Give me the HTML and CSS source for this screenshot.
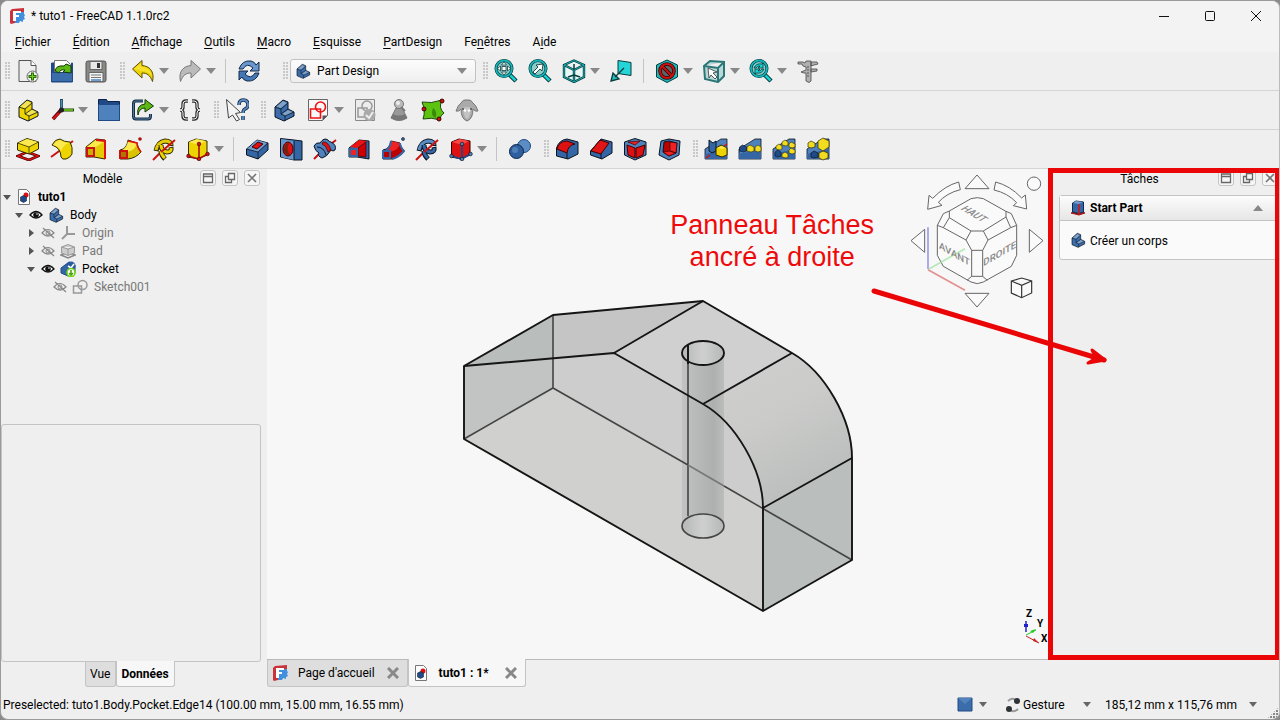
FILE: index.html
```html
<!DOCTYPE html>
<html lang="fr">
  <head>
    <meta charset="UTF-8" />
    <meta name="viewport" content="width=device-width, initial-scale=1.0" />
    <title>* tuto1 - FreeCAD 1.1.0rc2</title>
    <link rel="stylesheet" href="styles.css">
  </head>
  <body>
    <!-- shared icons -->
    <svg class="sprite" aria-hidden="true">
      <symbol id="i-logo" viewBox="0 0 16 16">
        <path d="M1 3l2-2 12-1v4H6v11l-4 1-1-1z" fill="#cb333b"/>
        <path d="M6 4h9v2l1 1-1 2 1 2-2 1v2l-3-1-1 2H6z" fill="#418fde"/>
        <g fill="#fff"><rect x="4" y="3" width="3" height="10"/><rect x="4" y="3" width="8" height="2"/><rect x="4" y="7" width="6" height="2"/></g>
      </symbol>
      <symbol id="i-body" viewBox="0 0 24 24">
        <path d="M3 9l8-7 5 2v7l6 3v4l-10 5-9-4z" fill="currentColor" stroke="#0b1521" stroke-linejoin="round"/>
        <path d="M4 9l7-6 4 2-6 5zM10 16l6-4 5 2-7 4z" fill="#fff" fill-opacity=".35"/>
        <path d="M3 9l6 2v5l4 2v5M9 11l7-6M9 16l7-5M13 18l9-4" fill="none" stroke="#0b1521" stroke-width=".8"/>
      </symbol>
      <symbol id="i-doc" viewBox="0 0 16 16">
        <path d="M2.500 .5h8l3 3v12h-11z" fill="#fff" stroke="#777"/>
        <circle cx="10" cy="6" r="2.500" fill="#d11"/>
        <path d="M4.500 8l3-1.500 3 1.500v4l-3 1.500-3-1.500z" fill="#204a87" stroke="#0b1521" stroke-width=".5"/>
      </symbol>
      <symbol id="i-caret" viewBox="0 0 10 6"><path d="M0 0h10L5 6z" fill="currentColor"/></symbol>
      <symbol id="i-dock" viewBox="0 0 14 14"><path d="M2.500 3h9v8.500h-9zM2.500 5.500h9" fill="none" stroke="#666" stroke-width="1.300"/></symbol>
      <symbol id="i-float" viewBox="0 0 14 14"><path d="M5.500 2.500h6v6h-6zM5 5.500H2.500v6h6V9" fill="none" stroke="#666" stroke-width="1.300"/></symbol>
      <symbol id="i-close" viewBox="0 0 14 14"><path d="M3 3l8 8M11 3l-8 8" fill="none" stroke="#777" stroke-width="1.600"/></symbol>
      <symbol id="i-eye" viewBox="0 0 16 16">
        <path d="M2 8q6-7 12 0-6 6-12 0z" fill="#fff" stroke="#111" stroke-width="1.300"/><circle cx="8" cy="8" r="2.800" fill="#111"/><circle cx="9" cy="7" r=".8" fill="#fff"/>
      </symbol>
      <symbol id="i-hidden" viewBox="0 0 16 16">
        <path d="M2 8q6-7 12 0-6 6-12 0zM3 3l11 10" fill="none" stroke="#888" stroke-width="1.200"/><circle cx="8" cy="8" r="2" fill="none" stroke="#888"/>
      </symbol>
      <symbol id="i-lens" viewBox="0 0 24 24">
        <path d="M15 15l7 7" stroke="#042a2a" stroke-width="4.500"/><path d="M15 15l6.500 6.500" stroke="#16d0d2" stroke-width="2.500"/>
        <circle cx="10" cy="9.500" r="8" fill="#8ccbcc" stroke="#063c3d" stroke-width="3"/><circle cx="10" cy="9.500" r="8" fill="none" stroke="#14b4b6" stroke-width="1.800"/>
      </symbol>
      <symbol id="i-ramp" viewBox="0 0 24 24">
        <path d="M1 12L17 2h6v20H1z" fill="#4f81bd" stroke="#0b1521" stroke-width=".8"/><path d="M1 17l22-5v10H1z" fill="#3465a4"/>
      </symbol>
    </svg>

    <div class="window">
      <header class="titlebar">
        <svg class="icon16"><use href="#i-logo"/></svg>
        <h1>* tuto1 - FreeCAD 1.1.0rc2</h1>
        <button type="button" aria-label="Réduire"><svg viewBox="0 0 12 12"><path d="M1 6.500h10"/></svg></button>
        <button type="button" aria-label="Agrandir"><svg viewBox="0 0 12 12"><rect x="1.500" y="1.500" width="9" height="9" rx="1"/></svg></button>
        <button type="button" aria-label="Fermer"><svg viewBox="0 0 12 12"><path d="M1 1l10 10M11 1L1 11"/></svg></button>
      </header>

      <nav class="menubar">
        <a href="#"><u>F</u>ichier</a>
        <a href="#"><u>É</u>dition</a>
        <a href="#"><u>A</u>ffichage</a>
        <a href="#"><u>O</u>utils</a>
        <a href="#"><u>M</u>acro</a>
        <a href="#"><u>E</u>squisse</a>
        <a href="#"><u>P</u>artDesign</a>
        <a href="#">Fe<u>n</u>êtres</a>
        <a href="#">A<u>i</u>de</a>
      </nav>

      <div class="toolbar-row">
        <div class="toolbar">
          <button type="button" aria-label="Nouveau"><svg viewBox="0 0 24 24"><path d="M3 1.500h12l5 5v16H3z" fill="#eee" stroke="#555"/><path d="M15 1.500v5h5" fill="#fff" stroke="#555"/><circle cx="16.500" cy="17.500" r="5.500" fill="#eee" stroke="#666"/><path d="M16.500 13.500v8M12.500 17.500h8" stroke="#2b6a0a" stroke-width="3"/><path d="M16.500 14.500v6M13.500 17.500h6" stroke="#73d216"/></svg></button>
          <button type="button" aria-label="Ouvrir"><svg viewBox="0 0 24 24"><path d="M1.500 4h3v12h17V4h1v19h-21z" fill="#204a87" stroke="#204a87"/><path d="M4.500 1.500h12l4 4v13h-16z" fill="#fff" stroke="#777"/><path d="M1.500 13.500h21v9h-21z" fill="#3b6daa" stroke="#204a87"/><path d="M5 12q1-6 9-5l2-2 5 2v7l-8-1 2-2q-5-1-6 3z" fill="#5db815" stroke="#17380a"/></svg></button>
          <button type="button" aria-label="Enregistrer"><svg viewBox="0 0 24 24"><rect x="2" y="2" width="20" height="21" rx="2" fill="#888a85" stroke="#555"/><path d="M6 2.500h12v8H6z" fill="#e8e8e8" stroke="#666"/><path d="M13 4h3v5h-3z" fill="#333"/><path d="M5 13.500h14v9H5z" fill="#f3f3f3" stroke="#666"/><path d="M7 16h10M7 18.500h10" stroke="#777"/><path d="M7 21h10" stroke="#729fcf" stroke-width="2"/></svg></button>
        </div>
        <div class="toolbar">
          <button type="button" class="with-menu" aria-label="Annuler"><svg viewBox="0 0 24 24"><path d="M1.500 10L11 1.500v5C18 7 24 12 21.500 22.500 19 16 16 14 11 14v5z" fill="#edd400" stroke="#5c4d00"/><path d="M3 10l7-6v4q9 0 11 9-4-5-11-5" fill="#fce94f" fill-opacity=".6"/></svg><svg class="caret"><use href="#i-caret"/></svg></button>
          <button type="button" class="with-menu" aria-label="Rétablir"><svg viewBox="0 0 24 24"><path d="M22.500 10L13 1.500v5C6 7 0 12 2.500 22.500 5 16 8 14 13 14v5z" fill="#bbb" stroke="#777"/></svg><svg class="caret"><use href="#i-caret"/></svg></button>
          <span class="sep"></span>
          <button type="button" aria-label="Rafraîchir"><svg viewBox="0 0 24 24"><path d="M2 10q3-9 12-8 4 1 5 4l3-3v9h-9l3-3q-6-6-10 1z" fill="#6797cc" stroke="#12294a"/><path d="M22 14q-3 9-12 8-4-1-5-4l-3 3v-9h9l-3 3q6 6 10-1z" fill="#4478b5" stroke="#12294a"/></svg></button>
        </div>
        <div class="toolbar workbench">
          <label class="select-box">
            <svg class="icon16 blue"><use href="#i-body"/></svg>
            <select aria-label="Atelier"><option>Part Design</option></select>
            <svg class="caret"><use href="#i-caret"/></svg>
          </label>
        </div>
        <div class="toolbar">
          <button type="button" aria-label="Tout ajuster"><svg viewBox="0 0 24 24"><use href="#i-lens"/><path d="M10 3l2.500 3h-5zM10 16l2.500-3h-5zM3.500 9.500l3-2.500v5zM16.500 9.500l-3-2.500v5zM8 7.500h4v4H8z" fill="#fff" stroke="#042a2a" stroke-width=".7"/></svg></button>
          <button type="button" aria-label="Ajuster la sélection"><svg viewBox="0 0 24 24"><use href="#i-lens"/><path d="M5 13l5-5-2-2 7-1-1 7-2-2-5 5z" fill="#fff" stroke="#042a2a" stroke-width=".8"/></svg></button>
          <button type="button" class="with-menu" aria-label="Vue isométrique"><svg viewBox="0 0 24 24"><path d="M12 1.500l10 4.500v12l-10 5-10-5V6zM2 6l10 5 10-5M12 11v12" fill="#e9f6f6" stroke="#063c3d" stroke-width="2.400"/><path d="M12 1.500l10 4.500v12l-10 5-10-5V6zM2 6l10 5 10-5M12 11v12" fill="none" stroke="#1cb0b2"/><path d="M12 11v-6M12 16l-6 2M12 16l6 2" stroke="#063c3d" stroke-width="1.500"/></svg><svg class="caret"><use href="#i-caret"/></svg></button>
          <button type="button" aria-label="Aligner à la sélection"><svg viewBox="0 0 24 24"><path d="M9 1.500l13 2v13l-13-2z" fill="#25d5d7" stroke="#063c3d"/><path d="M15 9l-9 9M2 22l2-8 6 6z" fill="#25b9bb" stroke="#063c3d" stroke-width="1.300"/></svg></button>
          <span class="sep"></span>
          <button type="button" class="with-menu" aria-label="Style de tracé"><svg viewBox="0 0 24 24"><path d="M12 1l10.500 5v12L12 23.500 1.500 18V6z" fill="#20b9bb" stroke="#063c3d"/><circle cx="12" cy="12" r="7" fill="#5e6363" stroke="#280000" stroke-width="3.500"/><path d="M7 7l10 10" stroke="#280000" stroke-width="3.500"/><circle cx="12" cy="12" r="7" fill="none" stroke="#cc1010" stroke-width="2"/><path d="M7 7l10 10" stroke="#cc1010" stroke-width="2"/></svg><svg class="caret"><use href="#i-caret"/></svg></button>
          <button type="button" class="with-menu" aria-label="Sélection"><svg viewBox="0 0 24 24"><path d="M2 7l6-5 14 1v14l-6 6-13-3zM2 7l14 2 6-6M16 9v14" fill="#b9d9d9" stroke="#2b7778" stroke-width="2"/><path d="M6 9l9 4-4 1 4 4-2 2-4-4-2 3z" fill="#fff" stroke="#333" stroke-width=".8"/></svg><svg class="caret"><use href="#i-caret"/></svg></button>
          <button type="button" class="with-menu" aria-label="Zoom"><svg viewBox="0 0 24 24"><use href="#i-lens"/><path d="M5 9q2-5 8-4l1-1v5H9l2-2q-3 0-4 2zM15 10q-2 5-8 4l-1 1v-5h5l-2 2q3 0 4-2z" fill="#16d0d2" stroke="#042a2a" stroke-width=".7"/></svg><svg class="caret"><use href="#i-caret"/></svg></button>
          <button type="button" aria-label="Mesurer"><svg viewBox="0 0 24 24"><path d="M10 2h5v20l-2 1.500-3-1.500v-8H8l-3-1 5-2V8L7 7 6 5H2V3h5l2 1zM15 3h6l1 2-4 1-3 1zM15 10h6v2l-6 1z" fill="#b0b0b0" stroke="#555" stroke-width=".9"/><path d="M11 8h2M11 11h2M11 14h2M11 17h2" stroke="#555"/></svg></button>
        </div>
      </div>

      <div class="toolbar-row">
        <div class="toolbar">
          <button type="button" class="yellow" aria-label="Créer une pièce"><svg><use href="#i-body"/></svg></button>
          <button type="button" class="with-menu" aria-label="Origine"><svg viewBox="0 0 24 24"><path d="M11.500 12V1" stroke="#204a63" stroke-width="3"/><path d="M11.500 2v9" stroke="#4c8fb0" stroke-width="1.500"/><path d="M12 12h12" stroke="#1d4708" stroke-width="3"/><path d="M14 12h9" stroke="#73d216" stroke-width="1.500"/><path d="M11 12l-8 9" stroke="#5b0a0a" stroke-width="3.500"/><path d="M9 15l-6 6" stroke="#d11" stroke-width="2"/><circle cx="11.500" cy="12" r="2.500" fill="#222"/></svg><svg class="caret"><use href="#i-caret"/></svg></button>
          <button type="button" aria-label="Groupe"><svg viewBox="0 0 24 24"><path d="M1.500 1.500h8l1 2h12v19h-21z" fill="#204a87" stroke="#0b2346"/><path d="M1.500 6.500h21v16h-21z" fill="#4f81bd" stroke="#204a87"/></svg></button>
          <button type="button" class="with-menu" aria-label="Lien"><svg viewBox="0 0 24 24"><path d="M12 3H5Q2.500 3 2.500 5.500v13Q2.500 21 5 21h12q2.500 0 2.500-3v-2" fill="none" stroke="#17304a" stroke-width="3"/><path d="M12 3H5Q2.500 3 2.500 5.500v13Q2.500 21 5 21h12q2.500 0 2.500-3v-2" fill="none" stroke="#52799b" stroke-width="1"/><path d="M7 17Q5 7 14 6V1.500L22.500 8 14 14v-4q-6 0-7 7z" fill="#5db815" stroke="#17380a"/></svg><svg class="caret"><use href="#i-caret"/></svg></button>
          <button type="button" aria-label="Jeu de variables"><svg viewBox="0 0 24 24"><path d="M10 3H8Q5 3 5 6v3q0 3-3 3 3 0 3 3v3q0 3 3 3h2M14 3h2q3 0 3 3v3q0 3 3 3-3 0-3 3v3q0 3-3 3h-2" fill="none" stroke="#333" stroke-width="3.400"/><path d="M10 3H8Q5 3 5 6v3q0 3-3 3 3 0 3 3v3q0 3 3 3h2M14 3h2q3 0 3 3v3q0 3 3 3-3 0-3 3v3q0 3-3 3h-2" fill="none" stroke="#eee"/></svg></button>
        </div>
        <div class="toolbar">
          <button type="button" aria-label="Qu'est-ce que c'est ?"><svg viewBox="0 0 24 24"><path d="M14 7q0-5 4-5 5 0 5 5 0 3-3 4-2 1-2 4M18 18v4" fill="none" stroke="#12294a" stroke-width="3.500"/><path d="M14 7q0-5 4-5 5 0 5 5 0 3-3 4-2 1-2 4M18 18v4" fill="none" stroke="#5b8cc4" stroke-width="1.800"/><path d="M1.500 1.500l14 13-5 1 4 6-3 1.500-4-6-4 3z" fill="#f3f3f3" stroke="#444"/></svg></button>
        </div>
        <div class="toolbar">
          <button type="button" class="blue" aria-label="Créer un corps"><svg><use href="#i-body"/></svg></button>
          <button type="button" class="with-menu" aria-label="Créer une esquisse"><svg viewBox="0 0 24 24"><path d="M2.500 1.500h19v16l-5 5h-14z" fill="#f8f8f8" stroke="#666"/><path d="M16.500 22.500v-5h5z" fill="#555"/><circle cx="14.500" cy="9" r="5" fill="none" stroke="#e11" stroke-width="1.600"/><path d="M4.500 11h10v9h-10z" fill="none" stroke="#e11" stroke-width="1.600"/></svg><svg class="caret"><use href="#i-caret"/></svg></button>
          <button type="button" aria-label="Valider l'esquisse"><svg viewBox="0 0 24 24"><path d="M2.500 1.500h19v21h-19z" fill="#ececec" stroke="#888"/><circle cx="14" cy="8" r="5" fill="none" stroke="#999" stroke-width="1.500"/><path d="M5 10h9v9H5z" fill="none" stroke="#999" stroke-width="1.500"/><circle cx="16.500" cy="17" r="6" fill="#aaa"/><path d="M13 17l3 3 4-6" fill="none" stroke="#eee" stroke-width="2"/></svg></button>
          <button type="button" aria-label="Vérifier la géométrie"><svg viewBox="0 0 24 24"><path d="M9 10h6l5 10q-8 5-16 0z" fill="#999" stroke="#777"/><path d="M6 16q6 3 12 0l2 4q-8 5-16 0z" fill="#777"/><circle cx="12" cy="6" r="4.500" fill="#bbb" stroke="#777"/><path d="M14 9l4 4" stroke="#777" stroke-width="2"/><circle cx="11" cy="5" r="2" fill="#eee"/></svg></button>
          <button type="button" aria-label="Forme liée"><svg viewBox="0 0 24 24"><path d="M1 4q9 2 20-2-4 8 2 13-4 2-4 7-8-3-17-1 3-8-1-17z" fill="#5cc410" stroke="#1d4708"/><path d="M12 10q4 2 3 10-6-2-3-10z" fill="#3a8a0a"/><circle cx="21" cy="3" r="2" fill="#c11" stroke="#400"/><circle cx="3" cy="11" r="2" fill="#c11" stroke="#400"/><circle cx="18" cy="21" r="2" fill="#c11" stroke="#400"/></svg></button>
          <button type="button" aria-label="Clone"><svg viewBox="0 0 24 24"><path d="M6 5Q8 1 12 2q4-1 6 3 3 2 5 8-3 1-5-2 0 10-6 12-6-2-6-12-2 3-5 2 2-6 5-8z" fill="#aaa" stroke="#777"/><path d="M8 10q4-2 8 0-1 10-4 11-3-1-4-11z" fill="#c4c4c4"/><path d="M9 12l2 1M15 12l-2 1" stroke="#fff" stroke-width="2"/><circle cx="8" cy="11" r="1" fill="#555"/><circle cx="16" cy="11" r="1" fill="#555"/></svg></button>
        </div>
      </div>

      <div class="toolbar-row">
        <div class="toolbar">
          <button type="button" aria-label="Protrusion"><svg viewBox="0 0 24 24"><path d="M2 19l9-4 11 4-9 4z" fill="none" stroke="#4d0505" stroke-width="2.800"/><path d="M2 19l9-4 11 4-9 4z" fill="none" stroke="#e11" stroke-width="1.300"/><path d="M1.500 6L11 1.500 22.500 5v7L13 17 1.500 13z" fill="#edd400" stroke="#302b00"/><path d="M2 6l9-4 11 3-9 5z" fill="#fce94f"/><path d="M1.500 6L13 10l9.500-5M13 10v7" fill="none" stroke="#302b00" stroke-width=".8"/></svg></button>
          <button type="button" aria-label="Révolution"><svg viewBox="0 0 24 24"><path d="M1 20L23 4" stroke="#c11" stroke-width="2"/><path d="M2 8Q5 2 10 2q4 3 10 3 3 5 2 12-2 4-6 5-4 1-5-2 0-9-9-12z" fill="#edd400" stroke="#302b00"/><path d="M3 8q4-5 7-5 4 3 9 3-5 1-8 8-2-5-8-6z" fill="#fce94f"/></svg></button>
          <button type="button" aria-label="Lissage"><svg viewBox="0 0 24 24"><path d="M2 10L12 2l9 1v19l-11-2H2z" fill="#e3cc05" stroke="#302b00"/><path d="M3 10l9-7 9 1-11 7z" fill="#fce94f"/><path d="M12 3l9 1v18" fill="none" stroke="#d11" stroke-width="2"/><path d="M3 11h7v8H3z" fill="#c9b000" stroke="#c11" stroke-width="2"/></svg></button>
          <button type="button" aria-label="Balayage"><svg viewBox="0 0 24 24"><path d="M2 13q7-1 8-10l9 3q0 3 4 9-5 6-13 7H2z" fill="#d9c200" stroke="#302b00"/><path d="M10 4l9 2q-1 7-10 9l-6-1q6-3 7-10z" fill="#fce94f"/><path d="M10 4l9 2q0 4 4 9" fill="none" stroke="#d11" stroke-width="1.600"/><path d="M2 14h7v7H2z" fill="#8b2500" fill-opacity=".5" stroke="#c11" stroke-width="2"/><circle cx="22" cy="2" r="1.800" fill="#a11"/></svg></button>
          <button type="button" aria-label="Hélice"><svg viewBox="0 0 24 24"><path d="M1 23l7-7" stroke="#c11" stroke-width="2"/><g fill="none"><path d="M4 14Q6 5 13 4q6 0 6 5" stroke="#302b00" stroke-width="5"/><path d="M4 13Q6 5 13 4q6 0 6 4" stroke="#e3cc05" stroke-width="3"/><path d="M9 8q0 6 6 7 5 0 4-5M9 14q0 4 4 8" stroke="#302b00" stroke-width="5"/><path d="M9 8q0 6 6 7 5 0 4-4M9 14q0 4 4 7" stroke="#edd400" stroke-width="3"/></g><path d="M9 15L23 3" stroke="#c11" stroke-width="2"/></svg></button>
          <button type="button" class="with-menu" aria-label="Primitive additive"><svg viewBox="0 0 24 24"><path d="M2.500 5L10 2l11 2v14l-9 4-9.500-2z" fill="#edd400" stroke="#302b00"/><path d="M3 5l8-3 9 2-7 4z" fill="#fce94f"/><path d="M2.500 19l10 3 9-5M13 7v15" fill="none" stroke="#a11" stroke-width="1.600"/><g fill="#d11" stroke="#400" stroke-width=".7"><circle cx="13" cy="7" r="1.800"/><circle cx="2.500" cy="19" r="1.800"/><circle cx="13" cy="22" r="1.800"/><circle cx="21.500" cy="17" r="1.800"/></g></svg><svg class="caret"><use href="#i-caret"/></svg></button>
          <span class="sep"></span>
          <button type="button" aria-label="Cavité"><svg viewBox="0 0 24 24"><path d="M1.500 12L12 3l11 3v7l-10 9-11.500-4z" fill="#3465a4" stroke="#0b1521"/><path d="M2 12l10-9 10 3-9 9z" fill="#729fcf"/><path d="M1.500 12L13 15l10-9M13 15v7" fill="none" stroke="#0b1521" stroke-width=".8"/><path d="M7 10l6-5 5 2-6 5z" fill="#d11" stroke="#400"/></svg></button>
          <button type="button" aria-label="Perçage"><svg viewBox="0 0 24 24"><path d="M1.500 1.500L15 3l8 1v19l-8 0-13.500-3z" fill="#3465a4" stroke="#0b1521"/><path d="M2 2l13 2v19L2 20z" fill="#6796ca"/><path d="M15 4v19" stroke="#0b1521"/><ellipse cx="9" cy="12" rx="5" ry="7" fill="#d11" stroke="#400"/><path d="M10 6q-3 6 1 12-7 0-6-7 1-5 5-5z" fill="#721"/></svg></button>
          <button type="button" aria-label="Rainure"><svg viewBox="0 0 24 24"><path d="M1 22l5-5M18 7l5-4" stroke="#c11" stroke-width="2"/><path d="M7 6q4-6 8-3 1 2 3 2 6 3 4 8-2 2-4 0-4 7-9 8-5-2-3-5-4-2-5-7 2-4 6-3z" fill="#4f81bd" stroke="#0b1521"/><path d="M10 5q5-1 8 8l-3 2Q13 8 9 7z" fill="#d11" stroke="#400" stroke-width=".7"/><path d="M4 10q7 0 9 8" fill="none" stroke="#0b1521"/></svg></button>
          <button type="button" aria-label="Enlèvement par lissage"><svg viewBox="0 0 24 24"><path d="M2 11L12 3l10 1v18l-12-2H2z" fill="#3465a4" stroke="#0b1521"/><path d="M3 10l9-7 8 1-10 7z" fill="#e11"/><path d="M11 11l8-6v15l-8-1z" fill="#c00" stroke="#400" stroke-width=".7"/><path d="M3 12h7v7H3z" fill="#e22" stroke="#3465a4" stroke-width="2"/></svg></button>
          <button type="button" aria-label="Enlèvement par balayage"><svg viewBox="0 0 24 24"><path d="M2 13q7-1 8-9l9 2q0 3 4 8-5 7-13 8H2z" fill="#b00" stroke="#0b1521"/><path d="M10 4l9 2q-1 7-10 9l-6-1q6-3 7-10z" fill="#e22"/><path d="M10 4q-1 7-5 9M19 6q0 4 4 8-5 6-12 8M2 14h7v7H2z" fill="none" stroke="#3465a4" stroke-width="2"/><circle cx="22" cy="2" r="1.500" fill="#3465a4" stroke="#0b1521" stroke-width=".6"/></svg></button>
          <button type="button" aria-label="Enlèvement hélicoïdal"><svg viewBox="0 0 24 24"><path d="M1 23l7-7" stroke="#c11" stroke-width="2"/><g fill="none"><path d="M4 14Q6 5 13 4q6 0 6 5" stroke="#0b1521" stroke-width="5"/><path d="M4 13Q6 5 13 4q6 0 6 4" stroke="#5b8cc4" stroke-width="3"/><path d="M9 8q0 6 6 7 5 0 4-5M9 14q0 4 4 8" stroke="#0b1521" stroke-width="5"/><path d="M9 8q0 6 6 7 5 0 4-4M9 14q0 4 4 7" stroke="#3465a4" stroke-width="3"/></g><path d="M9 15L23 3" stroke="#c11" stroke-width="2"/></svg></button>
          <button type="button" class="with-menu" aria-label="Primitive soustractive"><svg viewBox="0 0 24 24"><path d="M2.500 5L10 2l11 2v14l-9 4-9.500-2z" fill="#d11" stroke="#300"/><path d="M3 5l8-3 9 2-7 4z" fill="#f44"/><path d="M2.500 19l10 3 9-5M13 7v15" fill="none" stroke="#204a87" stroke-width="1.800"/><g fill="#4f81bd" stroke="#0b1521" stroke-width=".7"><circle cx="13" cy="7" r="1.800"/><circle cx="2.500" cy="19" r="1.800"/><circle cx="13" cy="22" r="1.800"/><circle cx="21.500" cy="17" r="1.800"/></g></svg><svg class="caret"><use href="#i-caret"/></svg></button>
          <span class="sep"></span>
          <button type="button" aria-label="Opération booléenne"><svg viewBox="0 0 24 24"><circle cx="16" cy="9" r="6.500" fill="#5b8cc4" stroke="#204a87"/><circle cx="8.500" cy="14.500" r="7" fill="#2f5f9f" stroke="#0b2346"/><circle cx="7" cy="13" r="3" fill="#729fcf" fill-opacity=".5"/></svg></button>
        </div>
        <div class="toolbar">
          <button type="button" aria-label="Congé"><svg viewBox="0 0 24 24"><path d="M1.500 11Q4 3 12 2l11 3v12l-10 5-11.500-3z" fill="#3465a4" stroke="#0b1521"/><path d="M2 12Q4 4 12 4l8 3q-7 1-8 9z" fill="#d11" stroke="#400"/><path d="M12 16v6" stroke="#0b1521"/></svg></button>
          <button type="button" aria-label="Chanfrein"><svg viewBox="0 0 24 24"><path d="M1.500 14L12 2l11 3v11l-10 6-11.500-4z" fill="#3465a4" stroke="#0b1521"/><path d="M2 14L11 3l9 3-8 11z" fill="#e01616" stroke="#400"/><path d="M12 17v5" stroke="#0b1521"/></svg></button>
          <button type="button" aria-label="Dépouille"><svg viewBox="0 0 24 24"><path d="M1.500 5L12 1.500 23 5v13l-11 5-10.500-5z" fill="#4f81bd" stroke="#0b1521"/><path d="M4 8l8 3v10l-7-3zM13 11l9-3-2 10-7 3z" fill="#d11" stroke="#400"/><path d="M5 5l12-1-5 4z" fill="#e22" stroke="#400" stroke-width=".7"/></svg></button>
          <button type="button" aria-label="Coque"><svg viewBox="0 0 24 24"><path d="M4 4l8-2 11 2-1 14-10 5-10-5z" fill="#4f81bd" stroke="#0b1521"/><path d="M7 5l5-1 8 2-1 10-7 3-6-4z" fill="#b00" stroke="#0b1521"/><path d="M13 5v9l6 2 1-10zM6 15l7-1 6 2-7 3z" fill="#e22" stroke="#400" stroke-width=".7"/></svg></button>
        </div>
        <div class="toolbar">
          <button type="button" aria-label="Symétrie"><svg viewBox="0 0 24 24"><use href="#i-ramp"/><path d="M5 3l4 3 3-2v10l-4 2-3-2z" fill="#3465a4" stroke="#0b1521"/><path d="M2 21l4-3M19 10l4-3" stroke="#c11" stroke-width="1.500"/><path d="M12 11l5-3 6 3v7l-5 2-6-2z" fill="#edd400" stroke="#302b00"/><path d="M13 11l5-2 4 2-4 1z" fill="#fce94f"/></svg></button>
          <button type="button" aria-label="Répétition linéaire"><svg viewBox="0 0 24 24"><use href="#i-ramp"/><path d="M1.500 10l3-2 4 2v4l-3 1-4-1z" fill="#204a87" stroke="#0b1521" stroke-width=".6"/><path d="M9 10l3-2 4 2v4l-3 1-4-1zM17 10l3-2 3 2v4l-3 1-3-1z" fill="#f2dc20" stroke="#302b00" stroke-width=".6"/></svg></button>
          <button type="button" aria-label="Répétition polaire"><svg viewBox="0 0 24 24"><use href="#i-ramp"/><path d="M3 15l3-2 3 2v4l-3 1-3-1z" fill="#204a87" stroke="#0b1521" stroke-width=".6"/><path d="M4 9l3-2 3 2v3l-2 1-4-1zM10 5l3-2 3 2v3l-2 1-4-1zM17 7l2-2 4 2v3l-3 1-3-1zM17 13l2-2 4 2v3l-3 1-3-1zM10 17l3-2 3 2v3l-2 1-4-1z" fill="#f2dc20" stroke="#302b00" stroke-width=".6"/></svg></button>
          <button type="button" aria-label="Transformation multiple"><svg viewBox="0 0 24 24"><use href="#i-ramp"/><path d="M12 4l5-3 6 3v6l-6 4-5-3zM2 6l3-2 4 2v4l-4 1-3-1zM13 16l4-2 5 2v5l-5 2-4-2z" fill="#f2dc20" stroke="#302b00" stroke-width=".7"/><path d="M5 16l3-2 4 2v4l-4 1-3-1z" fill="#204a87" stroke="#0b1521" stroke-width=".7"/></svg></button>
        </div>
      </div>

      <main class="workspace">
        <aside class="model-panel">
          <div class="panel-head">
            <h2>Modèle</h2>
            <button type="button" aria-label="Superposer"><svg><use href="#i-dock"/></svg></button>
            <button type="button" aria-label="Détacher"><svg><use href="#i-float"/></svg></button>
            <button type="button" aria-label="Fermer"><svg><use href="#i-close"/></svg></button>
          </div>
          <ul class="tree">
            <li class="open root"><svg class="icon16"><use href="#i-doc"/></svg><span>tuto1</span></li>
            <li class="open lvl1"><svg class="icon16"><use href="#i-eye"/></svg><svg class="icon16 blue"><use href="#i-body"/></svg><span>Body</span></li>
            <li class="closed lvl2 off"><svg class="icon16"><use href="#i-hidden"/></svg><svg class="icon16" viewBox="0 0 16 16"><path d="M7 1v8l-5 5M7 9h8" fill="none" stroke="#999" stroke-width="2"/></svg><span>Origin</span></li>
            <li class="closed lvl2 off"><svg class="icon16"><use href="#i-hidden"/></svg><svg class="icon16" viewBox="0 0 16 16"><path d="M1 12l7-3 7 3-7 3z" fill="none" stroke="#888" stroke-width="1.500"/><path d="M1.500 4L8 1.500 14.500 4v6L8 12.500 1.500 10zM1.500 4L8 6l6.500-2M8 6v6" fill="#ccc" stroke="#999"/></svg><span>Pad</span></li>
            <li class="open lvl2"><svg class="icon16"><use href="#i-eye"/></svg><svg class="icon16" viewBox="0 0 16 16"><path d="M1 7l8-6 6 3v8l-7 3-7-3z" fill="#3465a4" stroke="#204a87"/><circle cx="11" cy="5" r="4.500" fill="#2a5aa0"/><path d="M8 5l3 2 3-4" fill="none" stroke="#fff" stroke-width="1.600"/><circle cx="11" cy="11.500" r="4" fill="#fff" stroke="#73d216" stroke-width="1.600"/><path d="M11 9v4M9 12l2 2 2-2" fill="none" stroke="#4fa60f" stroke-width="1.600"/></svg><span>Pocket</span></li>
            <li class="lvl3 off"><svg class="icon16"><use href="#i-hidden"/></svg><svg class="icon16" viewBox="0 0 16 16"><circle cx="10.500" cy="6" r="4.500" fill="none" stroke="#999" stroke-width="1.500"/><path d="M1.500 7h8v7h-8z" fill="none" stroke="#999" stroke-width="1.500"/></svg><span>Sketch001</span></li>
          </ul>
          <div class="properties"></div>
          <div class="property-tabs">
            <button type="button">Vue</button>
            <button type="button" class="active">Données</button>
          </div>
        </aside>

        <section class="document">
          <div class="view3d">
            <svg class="scene" viewBox="267 169 784 490">
              <defs>
                <linearGradient id="round" x1="0" y1="0" x2=".5" y2="1"><stop offset="0" stop-color="#d0d0d0"/><stop offset=".5" stop-color="#cbcbca"/><stop offset="1" stop-color="#babebc"/></linearGradient>
                <linearGradient id="bore" x1="0" x2="1"><stop offset="0" stop-color="#c0c0c0"/><stop offset=".25" stop-color="#b7b9b8"/><stop offset=".75" stop-color="#a7aba9"/><stop offset="1" stop-color="#b8bab9"/></linearGradient>
                <linearGradient id="cap" x1="0" x2="1"><stop offset="0" stop-color="#b5b8b7"/><stop offset=".5" stop-color="#cfcfcf"/><stop offset="1" stop-color="#b5b8b7"/></linearGradient>
              </defs>
              <path d="M464 366L614 353 703 404C736 423 763 470 763 508V611L464 439z" fill="#d0d0ce"/>
              <path d="M553 358L614 353 703 404C736 423 763 470 763 508L553 388z" fill="#cdcdcd"/>
              <path d="M464 366L553 315V388L464 439z" fill="#c1c4c3"/>
              <path d="M464 366L553 315V358z" fill="#b9bdbb"/>
              <path d="M553 315L703 301 614 353 553 358z" fill="#c5c5c5"/>
              <path d="M614 353L703 301 792 353 703 404z" fill="#d0d0d0"/>
              <path d="M703 404L792 353C825 372 852 419 852 458L763 508C763 470 736 423 703 404z" fill="url(#round)"/>
              <path d="M763 508L852 458V560L763 611z" fill="#babebc"/>
              <path d="M682 353V526A21 12 0 0 0 724 526V353z" fill="url(#bore)" fill-opacity=".85"/>
              <ellipse cx="703" cy="353" rx="21" ry="12" fill="url(#cap)"/>
              <ellipse cx="703" cy="526" rx="21" ry="12" fill="url(#cap)"/>
              <g fill="none" stroke="#444" stroke-width="1.600">
                <path d="M553 315V388M464 439L553 388 688 465M724 486L852 560M688 344V516"/>
                <path d="M688 465L724 486" stroke="#777"/>
                <ellipse cx="703" cy="526" rx="21" ry="12"/>
              </g>
              <g fill="none" stroke="#151515" stroke-width="1.900" stroke-linejoin="round">
                <path d="M464 366L553 315 703 301 792 353C825 372 852 419 852 458V560L763 611 464 439z"/>
                <path d="M464 366L614 353 703 301M614 353L703 404C736 423 763 470 763 508V611M703 404L792 353M763 508L852 458M688 344V364"/>
                <ellipse cx="703" cy="353" rx="21" ry="12"/>
              </g>
            </svg>

            <svg class="navcube" viewBox="15 15 420 420">
              <g fill="none" stroke-width="5">
                <path d="M84 187V312" stroke="#9a9aea"/>
                <path d="M84 314L195 376" stroke="#e49090"/>
              </g>
              <g fill="#fafafa" stroke="#666" stroke-width="3" stroke-linejoin="round">
                <path d="M231 30L267 71H195zM231 426L195 385H267zM33 227L74 193V262zM429 227L388 193V262z"/>
                <circle cx="402" cy="56" r="20"/>
                <path d="M176 51L181 74Q140 84 115 112L126 121 83 133 87 91 98 100Q135 62 176 51zM287 51L282 75Q323 84 350 113L340 122 380 132 376 90 365 99Q330 62 287 51z"/>
                <path d="M112 181L130 146 148 138 213 101 232 98 250 101 316 138 334 146 350 181V271L334 304 250 351 232 356 213 351 130 304 112 271z"/>
                <path d="M148 138V158L213 198H250L318 156V138M130 188L112 181M130 188L148 158M130 188L198 225 213 198M198 225L215 256H248L264 225 250 198M264 225L332 188 350 181M332 188L318 156M215 256V334H248V256M215 334L201 346M248 334L262 346" fill="none"/>
              </g>
              <path d="M87 312L195 251" stroke="#a5e5a5" stroke-width="5" stroke-opacity=".8"/>
              <text transform="translate(180 133) rotate(30) skewX(-30)" class="face">HAUT</text>
              <text transform="translate(117 250) skewY(30)" class="face">AVANT</text>
              <text transform="translate(250 304) skewY(-30)" class="face">DROITE</text>
              <path d="M334 348L365 339 395 348V384L365 398 334 384zM334 348L365 361 395 348M365 361V398" fill="#fafafa" stroke="#333" stroke-width="3.500"/>
            </svg>

            <svg class="axes" viewBox="0 0 28 40">
              <path d="M5 16V27" stroke="#22c" stroke-width="1.500"/><path d="M3 19h4v3H3z" fill="#22c"/>
              <path d="M5 30L15 25" stroke="#2c2"/><path d="M9 26l6-2-3 4z" fill="#2c2"/>
              <path d="M5 31L18 38" stroke="#c22"/><path d="M13 33l5 5-6-2z" fill="#c22"/>
              <text x="5" y="12">Z</text><text x="16" y="22">Y</text><text x="20" y="37">X</text>
            </svg>
            <p class="callout">Panneau Tâches<br>ancré à droite</p>
          </div>
          <div class="doc-tabs">
            <div class="doc-tab"><svg class="icon16"><use href="#i-logo"/></svg><a href="#">Page d'accueil</a><button type="button" aria-label="Fermer l'onglet"><svg viewBox="0 0 12 12"><path d="M1 1l10 10M11 1L1 11"/></svg></button></div>
            <div class="doc-tab active"><svg class="icon16"><use href="#i-doc"/></svg><a href="#">tuto1 : 1*</a><button type="button" aria-label="Fermer l'onglet"><svg viewBox="0 0 12 12"><path d="M1 1l10 10M11 1L1 11"/></svg></button></div>
          </div>
        </section>

        <aside class="task-panel">
          <div class="panel-head">
            <h2>Tâches</h2>
            <button type="button" aria-label="Superposer"><svg><use href="#i-dock"/></svg></button>
            <button type="button" aria-label="Détacher"><svg><use href="#i-float"/></svg></button>
            <button type="button" aria-label="Fermer"><svg><use href="#i-close"/></svg></button>
          </div>
          <section class="task-box">
            <button type="button" class="task-title">
              <svg class="icon16" viewBox="0 0 16 16"><path d="M1 13l7-2 7 2-6 2z" fill="#c11" stroke="#a11"/><path d="M2.500 3L6 1l7.500 1v10L9 13.500 2.500 12z" fill="#3465a4" stroke="#12294a"/><path d="M3 3l3-2 7 1-4 2z" fill="#729fcf"/><path d="M9 4v10" stroke="#d11" stroke-width="1.500"/></svg>
              <span>Start Part</span>
              <svg class="caret up"><use href="#i-caret"/></svg>
            </button>
            <div class="task-body">
              <a href="#"><svg class="icon16 blue"><use href="#i-body"/></svg>Créer un corps</a>
            </div>
          </section>
          <div class="highlight"></div>
          <svg class="pointer" viewBox="0 0 240 80"><path d="M4 5L234 74"/><path d="M222 64L235 74 218 77 226 72z" class="head"/></svg>
        </aside>
      </main>

      <footer class="statusbar">
        <p>Preselected: tuto1.Body.Pocket.Edge14 (100.00 mm, 15.00 mm, 16.55 mm)</p>
        <button type="button" class="notify" aria-label="Notifications"><svg class="icon16" viewBox="0 0 16 16"><path d="M1 1h14v13H1z" fill="#3b6daa" stroke="#204a87"/><path d="M1 1l7 6 7-6" fill="#5382bd"/></svg><svg class="caret small"><use href="#i-caret"/></svg></button>
        <label class="status-select nav-style">
          <svg class="icon16" viewBox="0 0 16 16"><path d="M3 4q4-4 8-1M13 12q-4 4-8 1" fill="none" stroke="#999" stroke-width="2"/><circle cx="12" cy="4" r="3" fill="#2e3436"/><circle cx="4" cy="12" r="3" fill="#2e3436"/></svg>
          <select aria-label="Style de navigation"><option>Gesture</option></select>
          <svg class="caret small"><use href="#i-caret"/></svg>
        </label>
        <label class="status-select">
          <select aria-label="Dimensions"><option>185,12 mm x 115,76 mm</option></select>
          <svg class="caret small"><use href="#i-caret"/></svg>
        </label>
        <span class="grip"></span>
      </footer>
    </div>
  </body>
</html>
```
FILE: styles.css
```css
* {
  box-sizing: border-box;
  margin: 0;
  padding: 0;
}
body {
  background-color: #8a8a8a;
  font-family: Roboto, 'Noto Sans', sans-serif;
  font-size: 12px;
  line-height: 18px;
  color: #000;
}
button,
select {
  font: inherit;
  color: inherit;
  border: 0;
  background: none;
  appearance: none;
  outline: none;
}
a {
  color: inherit;
  text-decoration: none;
}
ul {
  list-style: none;
}
h1,
h2 {
  font-size: 12px;
  font-weight: normal;
}
svg {
  display: block;
  flex: none;
}
.sprite {
  position: absolute;
  width: 0;
  height: 0;
}
.icon16 {
  width: 16px;
  height: 16px;
}
.blue {
  color: #3b6daa;
}
.yellow {
  color: #edd400;
}
.caret {
  width: 10px;
  height: 6px;
  color: #888;
}
.caret.small {
  width: 8px;
  height: 5px;
  color: #666;
}
.caret.up {
  transform: rotate(180deg);
}

/* window frame */
.window {
  display: flex;
  flex-direction: column;
  height: 100vh;
  background-color: #efefef;
  border: 1px solid #9a9a9a;
  border-right-color: #bbb;
  border-radius: 8px;
  overflow: hidden;
}
.titlebar {
  display: flex;
  align-items: center;
  height: 30px;
  padding-left: 8px;
  background-color: #f3f3f3;
}
.titlebar h1 {
  flex: 1;
  margin-left: 6px;
}
.titlebar button {
  display: flex;
  align-items: center;
  justify-content: center;
  width: 46px;
  height: 30px;
}
.titlebar button svg {
  width: 12px;
  height: 12px;
  fill: none;
  stroke: #111;
}
.menubar {
  display: flex;
  height: 21px;
  padding-left: 3px;
  background-color: #f3f3f3;
}
.menubar a {
  padding: 2px 11px;
}
.menubar u {
  text-underline-offset: 2px;
}

/* toolbars */
.toolbar-row {
  display: flex;
  height: 39px;
  border-bottom: 1px solid #d4d4d4;
}
.toolbar {
  display: flex;
  align-items: center;
  margin-right: 3px;
}
.toolbar::before {
  content: '';
  width: 6px;
  height: 18px;
  margin-left: 4px;
  background-image: radial-gradient(circle at 1px 1px, #c8c8c8 1px, transparent 1px);
  background-size: 3px 3px;
}
.toolbar button {
  display: flex;
  align-items: center;
  width: 34px;
  padding-left: 5px;
}
.toolbar .with-menu {
  width: 47px;
}
.toolbar button svg:not(.caret) {
  width: 24px;
  height: 24px;
}
.toolbar button .caret {
  margin-left: 4px;
}
.sep {
  width: 1px;
  height: 24px;
  margin: 0 6px 0 5px;
  background-color: #c4c4c4;
}
.workbench {
  margin-left: 10px;
}
.select-box {
  position: relative;
  display: flex;
  align-items: center;
}
.workbench .select-box {
  margin-left: 1px;
}
.select-box select {
  width: 186px;
  height: 24px;
  padding-left: 26px;
  border: 1px solid #c2c2c2;
  border-radius: 3px;
  background-image: linear-gradient(#fcfcfc, #efefef);
}
.select-box .icon16,
.select-box .caret {
  position: absolute;
  left: 5px;
}
.select-box .caret {
  left: auto;
  right: 9px;
}

/* panels */
.workspace {
  display: flex;
  flex: 1;
  min-height: 0;
}
.panel-head {
  display: flex;
  gap: 6px;
  height: 19px;
}
.panel-head h2 {
  flex: 1;
  padding-left: 10px;
  line-height: 20px;
  text-align: center;
}
.panel-head button {
  width: 16px;
  height: 16px;
  margin-top: 1px;
  border: 1px solid #c4c4c4;
  border-radius: 3px;
  background-color: #f6f6f6;
}
.panel-head button svg {
  width: 14px;
  height: 14px;
}
.model-panel {
  display: flex;
  flex-direction: column;
  width: 266px;
  padding-bottom: 3px;
}
.model-panel .panel-head {
  padding-right: 7px;
}
.tree {
  flex: 1;
}
.tree li {
  display: flex;
  align-items: center;
  gap: 4px;
  height: 18px;
}
.tree li::before {
  content: '';
  width: 8px;
  margin: 0 1px 0 2px;
}
.tree .open::before {
  width: 0;
  border: 4px solid transparent;
  border-top: 5px solid #555;
  border-bottom: 0;
}
.tree .closed::before {
  width: 0;
  margin: 0 2px 0 4px;
  border: 4px solid transparent;
  border-left: 5px solid #555;
  border-right: 0;
}
.tree span {
  margin-left: 2px;
}
.tree .root {
  font-weight: bold;
}
.tree .lvl1 {
  padding-left: 12px;
}
.tree .lvl2 {
  padding-left: 24px;
}
.tree .lvl3 {
  padding-left: 36px;
}
.tree .off {
  color: #777;
}
.properties {
  flex: 1;
  margin-right: 6px;
  border: 1px solid #c4c4c4;
  border-radius: 3px;
}
.property-tabs {
  display: flex;
  padding-left: 84px;
}
.property-tabs button {
  height: 25px;
  padding: 0 5px 0 4px;
  border: 1px solid #c4c4c4;
  border-top: 0;
  border-radius: 0 0 3px 3px;
  background-color: #dedede;
}
.property-tabs .active {
  margin-top: -1px;
  height: 26px;
  background-color: #f7f7f7;
  font-weight: bold;
}

/* 3d view */
.document {
  display: flex;
  flex: 1;
  flex-direction: column;
  min-width: 0;
  padding-bottom: 3px;
}
.view3d {
  position: relative;
  flex: 1;
  min-height: 0;
  background-color: #f7f7f7;
}
.scene {
  width: 100%;
  height: 100%;
}
.navcube {
  position: absolute;
  top: 1px;
  right: 6px;
  width: 140px;
  height: 140px;
}
.face {
  font: 500 29px Roboto, sans-serif;
  fill: #888;
}
.axes {
  position: absolute;
  right: 2px;
  bottom: 14px;
  width: 28px;
  height: 40px;
  font: bold 10px Roboto, sans-serif;
}
.callout {
  position: absolute;
  top: 40px;
  right: 177px;
  color: #ee0a0a;
  font-family: 'Liberation Sans', sans-serif;
  font-size: 27px;
  line-height: 32px;
  text-align: center;
}
.doc-tabs {
  display: flex;
  height: 28px;
  border-top: 1px solid #b9b9b9;
}
.doc-tab {
  display: flex;
  align-items: center;
  padding: 0 8px 0 4px;
  border: 1px solid #c4c4c4;
  border-top: 0;
  border-radius: 0 0 3px 3px;
  background-color: #dedede;
}
.doc-tab a {
  margin: 0 12px 0 10px;
}
.doc-tab button svg {
  width: 12px;
  height: 12px;
  stroke: #888;
  stroke-width: 3;
}
.doc-tab.active {
  margin-top: -1px;
  background-color: #f7f7f7;
  font-weight: bold;
}
.doc-tab.active a {
  margin-right: 16px;
}

/* tasks */
.task-panel {
  position: relative;
  width: 228px;
}
.task-panel .panel-head {
  padding: 0 1px 0 6px;
}
.task-box {
  margin: 7px 1px 0 8px;
  border: 1px solid #c4c4c4;
  border-radius: 3px;
  background-color: #fafafa;
}
.task-title {
  display: flex;
  align-items: center;
  gap: 4px;
  width: 100%;
  height: 25px;
  padding: 0 14px 0 10px;
  border-bottom: 1px solid #c4c4c4;
  background-image: linear-gradient(#fcfcfc, #e6e6e6);
  font-weight: bold;
  text-align: left;
}
.task-title span {
  flex: 1;
}
.task-body {
  padding: 11px 10px 9px;
}
.task-body a {
  display: flex;
  gap: 4px;
}
.highlight {
  position: absolute;
  top: -1px;
  right: -1px;
  bottom: 30px;
  left: -3px;
  border: 5px solid #ea0606;
}
.pointer {
  position: absolute;
  top: 117px;
  right: 169px;
  width: 240px;
  height: 80px;
  fill: none;
  stroke: #ea0606;
  stroke-width: 5;
  stroke-linecap: round;
}
.pointer .head {
  fill: #ea0606;
  stroke-width: 3;
  stroke-linejoin: round;
}

/* status bar */
.statusbar {
  display: flex;
  align-items: center;
  height: 29px;
  padding-left: 2px;
}
.statusbar p {
  flex: 1;
}
.notify {
  display: flex;
  align-items: center;
  gap: 6px;
  margin-right: 18px;
}
.status-select {
  display: flex;
  align-items: center;
  gap: 11px;
  margin-right: 10px;
}
.nav-style {
  gap: 2px;
  margin-right: 14px;
}
.nav-style .caret {
  margin-left: 16px;
}
.grip {
  align-self: flex-end;
  width: 12px;
  height: 12px;
  background-image: radial-gradient(circle at 1px 1px, #888 1px, transparent 1px);
  background-size: 3px 3px;
  clip-path: polygon(100% 0, 100% 100%, 0 100%);
}
```
